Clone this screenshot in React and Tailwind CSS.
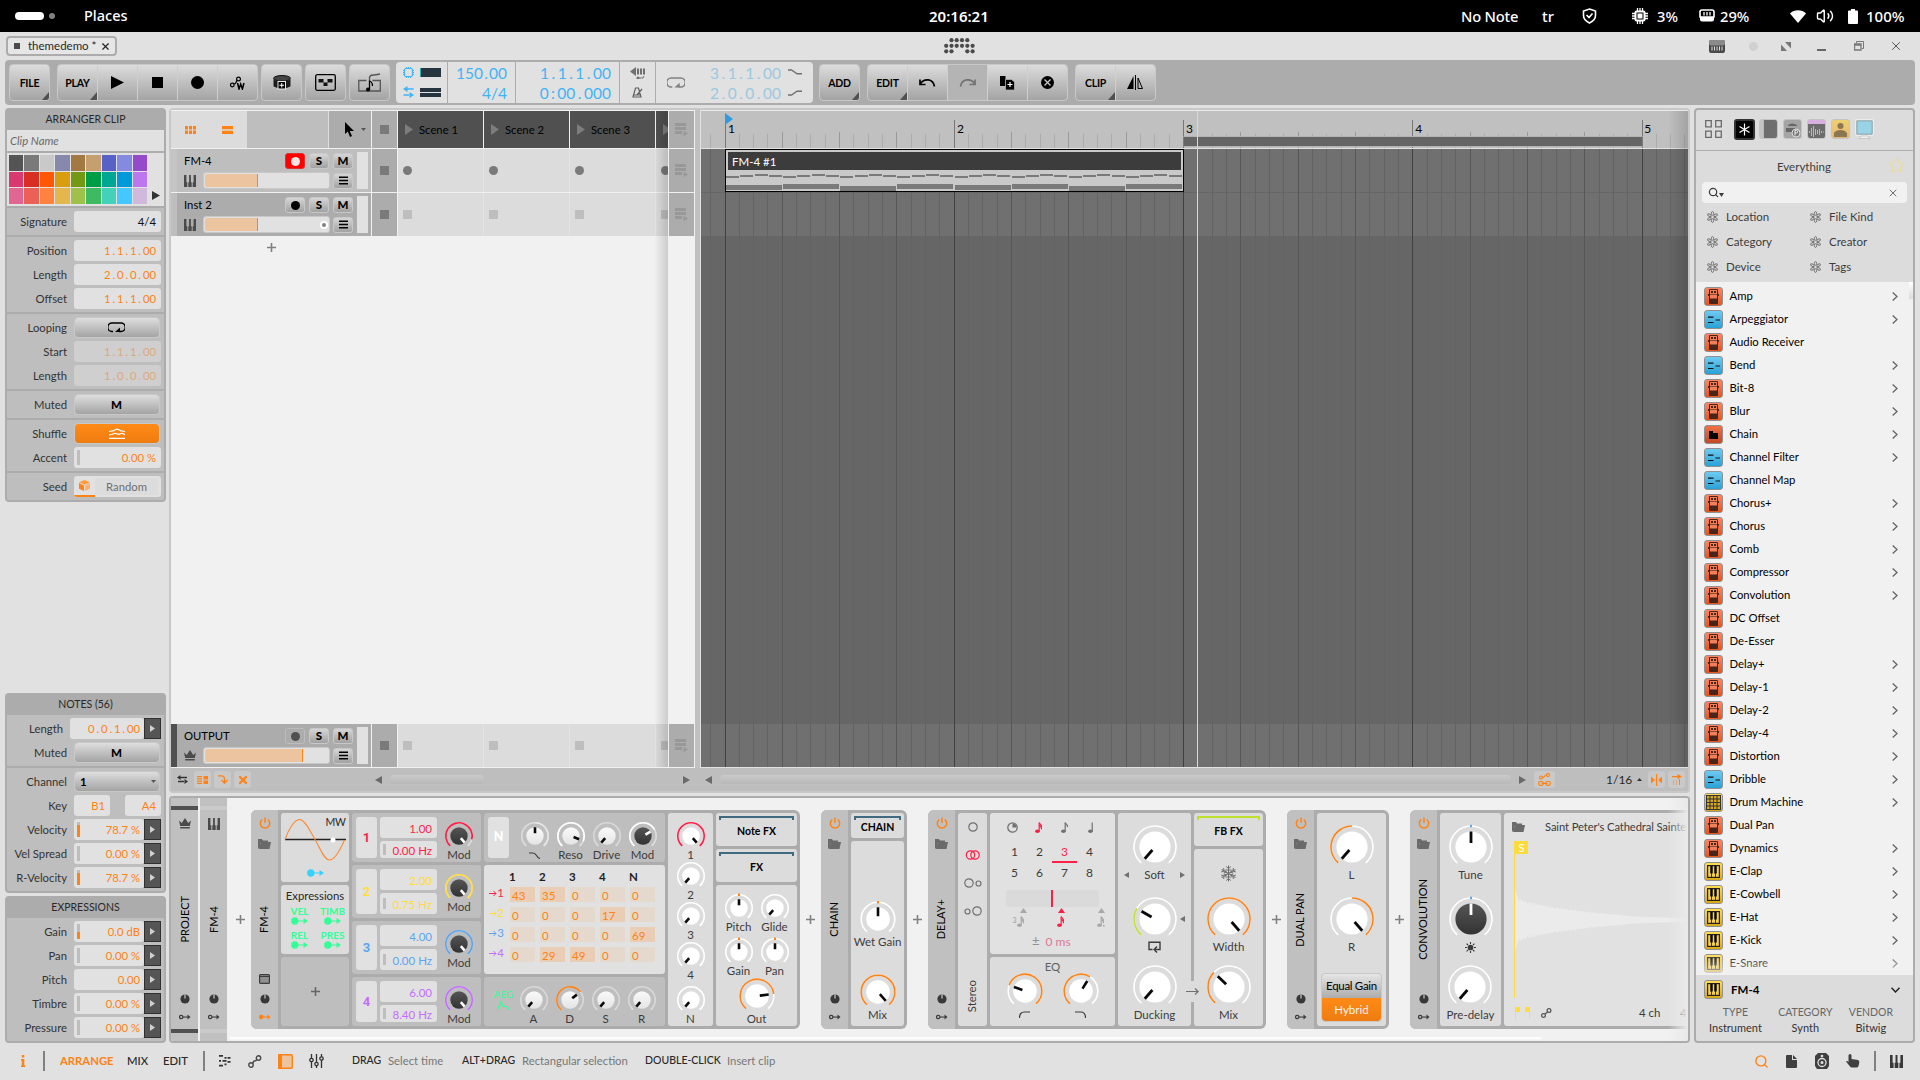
import React from "react";
import { Search, X, Volume2, Star } from "lucide-react";

const polar = (c, r, deg) => {
  const a = (deg * Math.PI) / 180;
  return [c + r * Math.sin(a), c - r * Math.cos(a)];
};
const arcPath = (c, r, from, to) => {
  const [x1, y1] = polar(c, r, from);
  const [x2, y2] = polar(c, r, to);
  return `M${x1} ${y1}A${r} ${r} 0 ${to - from > 180 ? 1 : 0} 1 ${x2} ${y2}`;
};

const KNOBS = {
  s: { box: 30, r: 13.2, disc: 8.7, from: 2.8, w: 2.6 },
  m: { box: 38, r: 16.8, disc: 11.8, from: 2.8, w: 2.6 },
  l: { box: 46, r: 21, disc: 15.6, from: 4, w: 2.8 },
};

function Knob({ size = "s", at = -139, arc, color = "#ff8214", track = "#ffffff", dark, soft, tip }) {
  const k = KNOBS[size];
  const c = k.box / 2;
  const [x1, y1] = polar(c, k.from, at);
  const [x2, y2] = polar(c, k.disc, at);
  return (
    <svg width={k.box} height={k.box} className="block shrink-0">
      <defs>
        <linearGradient id="darkDisc" x1="0" y1="0" x2="0" y2="1">
          <stop offset="0" stopColor="#555" />
          <stop offset="1" stopColor="#333" />
        </linearGradient>
        <linearGradient id="softDisc" x1="0" y1="0" x2="0" y2="1">
          <stop offset="0" stopColor="#fafafa" />
          <stop offset="1" stopColor="#e4e4e4" />
        </linearGradient>
      </defs>
      <path d={arcPath(c, k.r, -139, 139)} fill="none" stroke={track} strokeWidth="1.6" />
      {arc && <path d={arcPath(c, k.r, arc[0], arc[1])} fill="none" stroke={color} strokeWidth="1.6" />}
      {tip && <rect x={c - 1} y={c - k.r - 1.2} width="2" height="2.4" fill={tip} />}
      <circle cx={c} cy={c} r={k.disc} fill={dark ? "url(#darkDisc)" : soft ? "url(#softDisc)" : "#fff"} />
      <line x1={x1} y1={y1} x2={x2} y2={y2} stroke={dark ? "#fff" : "#0a0a0a"} strokeWidth={k.w} />
    </svg>
  );
}

function Unit({ label, className = "", labelClass = "", size = "s", ...rest }) {
  return (
    <div className={"flex flex-col items-center " + className}>
      <Knob size={size} {...rest} />
      <div className={"flex h-3 items-center justify-center whitespace-nowrap text-[11.5px] leading-3 text-[#3c3c3c] " + (size === "l" ? "" : "-mt-0.5 ") + labelClass}>
        {label}
      </div>
    </div>
  );
}

/* ---------- small drawings ---------- */
const Keys = ({ className = "", w = 12, h = 12, color = "#4a4a4a" }) => (
  <svg width={w} height={h} viewBox="0 0 12 12" className={className} preserveAspectRatio="none">
    <path d="M0 0h2.4v7.2h.9V12H0zM4.3 12V7.2h.8V0h1.8v7.2h.8V12zM12 0H9.6v7.2h-.9V12H12z" fill={color} />
  </svg>
);
const Crown = ({ color = "#4a4a4a" }) => (
  <svg width="12" height="11" viewBox="0 0 12 11">
    <path d="M0 2.5 2.8 5 6 0l3.2 5L12 2.5 10.8 8H1.2zM1.2 9h9.6v1.5H1.2z" fill={color} />
  </svg>
);
const PlusMark = ({ color = "#808080" }) => (
  <svg width="9" height="9" className="block"><path d="M4.5 0v9M0 4.5h9" stroke={color} strokeWidth="1.6" /></svg>
);
const Power = () => (
  <svg width="12" height="14" viewBox="0 0 12 14">
    <path d="M3.2 3.6a4.7 4.7 0 1 0 5.6 0M6 1.5v5.5" fill="none" stroke="#ff8214" strokeWidth="1.5" />
  </svg>
);
const Folder = () => (
  <svg width="13" height="10" viewBox="0 0 13 10">
    <path d="M0 0h4l1 1.5h5V3H3L1.5 9.5H0z" fill="#6a6a6a" />
    <path d="M3 3h10l-1.5 7H1z" fill="#6a6a6a" />
  </svg>
);
const MiniKnob = () => (
  <svg width="10" height="10"><circle cx="5" cy="5" r="4.6" fill="#383838" /><path d="M5 .5v4" stroke="#c0c0c0" strokeWidth="1.3" /></svg>
);
const Route = ({ color = "#3c3c3c", fill }) => (
  <svg width="12" height="6" viewBox="0 0 12 6">
    <circle cx="2.2" cy="3" r="1.7" fill={fill ? color : "none"} stroke={color} strokeWidth="1.2" />
    <path d="M4 3h6" stroke={color} strokeWidth="1.2" />
    <path d="M8.5.5 11.5 3l-3 2.5z" fill={color} />
  </svg>
);
const ModRoute = ({ color }) => (
  <svg width="17" height="8" viewBox="0 0 17 8" className="block">
    <circle cx="3.8" cy="4" r="3.7" fill={color} />
    <path d="M4 4h10" stroke={color} strokeWidth="1.2" />
    <path d="M12.5 1 17 4l-4.5 3z" fill={color} />
  </svg>
);
const LoopIcon = ({ color = "#000", w = 17 }) => (
  <svg width={w} height={w * 0.65} viewBox="0 0 17 11">
    <path d="M5 9.5H4A4 4 0 0 1 4 1h9a4 4 0 0 1 0 8.5h-2" fill="none" stroke={color} strokeWidth="1.5" />
    <path d="M12 5.5V10H7z" fill={color} />
  </svg>
);
const Tri = ({ dir = "r", color = "#6a6a6a", w = 7, h = 8 }) => (
  <svg width={w} height={h} viewBox="0 0 7 8" preserveAspectRatio="none" className="block">
    <path d={dir === "r" ? "M0 0 7 4 0 8z" : dir === "l" ? "M7 0 0 4l7 4z" : "M0 8 3.5 0 7 8z"} fill={color} />
  </svg>
);
const Note = ({ color = "#707070", flags = 1, dot }) => (
  <svg width="9" height="11" viewBox="0 0 9 11" className="block">
    <ellipse cx="2.4" cy="9.2" rx="2.3" ry="1.7" fill={color} />
    <path d="M4.2 9.2V.5" stroke={color} strokeWidth="1.2" />
    {flags > 0 && <path d="M4.2.8c.5 1.6 3 1.6 2.2 4.2" fill="none" stroke={color} strokeWidth="1.3" />}
    {flags > 1 && <path d="M4.2 3c.5 1.6 3 1.6 2.2 4.2" fill="none" stroke={color} strokeWidth="1.3" />}
    {dot && <rect x="6" y="9" width="1.6" height="1.6" fill={color} />}
  </svg>
);
const Flake = () => (
  <svg width="17" height="17" viewBox="-8.5 -8.5 17 17" fill="none" stroke="#707070" strokeWidth="1">
    {[0, 60, 120, 180, 240, 300].map((a) => (
      <path key={a} transform={`rotate(${a})`} d="M0 0V-8M-2.300-7 0-5 2.300-7M-2-4.300 0-2.600 2-4.300" />
    ))}
  </svg>
);
const Menu = () => (
  <svg width="9" height="9"><path d="M0 1.2h9M0 4.5h9M0 7.8h9" stroke="#000" strokeWidth="1.6" /></svg>
);
const Chain = ({ color = "#4a4a4a" }) => (
  <svg width="14" height="13" viewBox="0 0 14 13" fill="none" stroke={color} strokeWidth="1.4">
    <circle cx="3" cy="10" r="2.2" /><circle cx="10.5" cy="3" r="2.2" /><path d="M4.5 8.5C6 7 5 6 6.5 6S8 5 9 4.5" />
  </svg>
);

/* Position values put each dot in a digit-wide cell. */
function Pos({ children, dot = "w-[6.4px]" }) {
  return children.split("").map((ch, i) =>
    ch === "." || ch === ":" ? (
      <span key={i} className={"inline-block text-center " + dot}>{ch}</span>
    ) : ch
  );
}

/* ---------- system bar ---------- */
function SystemBar() {
  return (
    <div className="flex h-8 items-center bg-black font-['Noto_Sans',sans-serif] text-[14.7px] font-medium text-white">
      <div className="ml-[15px] h-2 w-[29px] rounded-full bg-white" />
      <div className="ml-[5px] size-[6px] rounded-full bg-[#808080]" />
      <div className="ml-[29px] w-[845px] text-[14.5px]">Places</div>
      <div className="w-[532px] text-[15px] font-semibold">20:16:21</div>
      <div className="w-[81px] tracking-[-0.2px]">No Note</div>
      <div className="w-[40px]">tr</div>
      <div className="w-[50px]">
        <svg width="15" height="16" viewBox="0 0 15 16" fill="none" stroke="#fff" strokeWidth="1.6">
          <path d="M7.5 1 13.5 3v4.500c0 4-3 6-6 7.500-3-1.500-6-3.500-6-7.500V3zM4.500 7l2.500 2.500 3.500-4" />
        </svg>
      </div>
      <div className="flex w-[67px] items-center gap-[9px]">
        <svg width="16" height="16" viewBox="0 0 16 16">
          <path d="M5.5 0v16M8 0v16M10.5 0v16M0 5.5h16M0 8h16M0 10.5h16" stroke="#fff" strokeWidth="1.3" />
          <rect x="2.5" y="2.5" width="11" height="11" rx="2" fill="#fff" />
          <rect x="5" y="5" width="6" height="6" fill="#fff" stroke="#000" />
        </svg>
        <span>3%</span>
      </div>
      <div className="flex w-[91px] items-center gap-[5px]">
        <svg width="16" height="13" viewBox="0 0 16 13">
          <path d="M1 3a2 2 0 0 1 2-2h10a2 2 0 0 1 2 2v5H1z" fill="none" stroke="#fff" strokeWidth="1.6" />
          <path d="M5 3v3.5M8 3v3.5M11 3v3.5" stroke="#fff" strokeWidth="1.3" />
          <path d="M1 8h14v2.500a2 2 0 0 1-2 2H3a2 2 0 0 1-2-2z" fill="#fff" />
        </svg>
        <span>29%</span>
      </div>
      <svg width="16" height="13" viewBox="0 0 16 13"><path d="M0 3.500C4-.8 12-.8 16 3.500L8 13z" fill="#fff" /></svg>
      <Volume2 size={18} strokeWidth={1.9} className="ml-[10px]" />
      <svg width="11" height="15" viewBox="0 0 11 15" className="ml-[14px]"><path d="M3 0h4v1.500h2a1 1 0 0 1 1 1V14a1 1 0 0 1-1 1H1a1 1 0 0 1-1-1V2.500a1 1 0 0 1 1-1h2z" fill="#fff" /></svg>
      <span className="ml-[7px] text-[15px]">100%</span>
    </div>
  );
}

function TitleRow() {
  return (
    <div className="flex h-7 items-center">
      <div className="ml-1.5 flex h-[20px] w-[111px] items-center rounded border-2 border-[#acacac] bg-[#e6e6e6]">
        <div className="ml-1.5 size-[6px] bg-[#4a4a4a]" />
        <span className="ml-2 w-[72px] text-[11.5px] whitespace-nowrap text-[#282828]">themedemo *</span>
        <X size={11} strokeWidth={2.5} color="#222" />
      </div>
      <svg width="31" height="16" viewBox="0 0 31 16" className="ml-[827px]" fill="#4a4a4a">
        {[7.5, 12.7, 18, 23.3].map((x) => <circle key={x} cx={x} cy="2.2" r="2.1" />)}
        {[2.2, 7.5, 12.7, 18, 23.3, 28.6].map((x) => <circle key={x} cx={x} cy="7.8" r="2.1" />)}
        {[2.2, 7.5, 23.3, 28.6].map((x) => <circle key={x} cx={x} cy="13.3" r="2.1" />)}
      </svg>
      <svg width="16" height="13" viewBox="0 0 16 13" className="ml-[734px]">
        <rect width="16" height="13" rx="2" fill="#484848" />
        <rect width="16" height="5.5" rx="2" fill="#8a8a8a" />
        <path d="M3 6.500V10.500M5.500 6.500V10.500M8 6.500V10.500M10.500 6.500V10.500M13 6.500V10.500" stroke="#e1e1e1" />
      </svg>
      <div className="ml-6 size-[9px] rounded-full bg-[#d0d0d0]" />
      <svg width="10" height="9" viewBox="0 0 10 9" className="ml-[23px]"><path d="M4 0H10v6.500zM0 2.500v6.500h6z" fill="#777" /></svg>
      <div className="mt-2 ml-[26px] h-[2px] w-[9px] bg-[#666]" />
      <svg width="10" height="10" className="ml-7" fill="none" stroke="#777"><path d="M2.500 2V.500h7v7H8" /><path d="M.5 3h6.500v6H.500zM.500 4h6" strokeWidth="1.3" /></svg>
      <X size={14} strokeWidth={1.7} color="#555" className="ml-[25px]" />
    </div>
  );
}

/* ---------- toolbar ---------- */
const btn = "border border-[#c8c8c8] bg-linear-to-b from-[#dcdcdc] to-[#a4a4a4]";
const Group = ({ children, className }) => (
  <div className={`flex h-[37px] divide-x divide-[#cfcfcf] overflow-hidden rounded ${btn} ${className}`}>{children}</div>
);
const Tool = ({ children, menu, className = "" }) => (
  <div className={"relative flex flex-1 items-center justify-center text-[10.5px] font-bold tracking-[-0.2px] text-black " + (menu ? "pt-[2px] " : "") + className}>
    {children}
    {menu && <svg width="7" height="8" className="absolute right-0 bottom-0"><path d="M7 0v8H0z" fill="#505050" /></svg>}
  </div>
);

function Toolbar() {
  return (
    <div className="mx-[5px] flex h-[45px] items-center rounded bg-[#acacac] pl-1">
      <Group className="w-[41px]"><Tool menu>FILE</Tool></Group>
      <Group className="ml-[7px] w-[201px]">
        <Tool menu>PLAY</Tool>
        <Tool><Tri color="#000" w={13} h={13} /></Tool>
        <Tool><div className="size-[11px] bg-black" /></Tool>
        <Tool><div className="size-[13px] rounded-full bg-black" /></Tool>
        <Tool>
          <svg width="16" height="14" viewBox="0 0 16 14" fill="none" stroke="#000" strokeWidth="1.2">
            <circle cx="2.3" cy="9" r="1.8" /><circle cx="8.5" cy="3" r="1.9" /><path d="M4 8c3 0 1.500-3 3.500-4" />
            <path d="m7.500 7 1.500 6 1.700-5 1.700 5L14 7" strokeWidth="1.5" />
          </svg>
        </Tool>
      </Group>
      <Group className="ml-[3px] w-[41px]">
        <Tool>
          <svg width="18" height="15" viewBox="0 0 18 15">
            <path d="M.5 4C2 7 16 7 17.500 4V11c-2 3-15 3-17 0z" fill="#1c1c1c" />
            <ellipse cx="9" cy="3.3" rx="8.4" ry="2.8" fill="#444" stroke="#111" />
            <rect x="5" y="6.500" width="7.500" height="7.500" fill="#000" stroke="#e8e8e8" /><path d="M8.750 8v4.500M6.500 10.250H11" stroke="#fff" />
          </svg>
        </Tool>
      </Group>
      <Group className="ml-[3px] w-[41px]">
        <Tool>
          <svg width="21" height="17" viewBox="0 0 21 17"><rect x=".7" y=".7" width="19.6" height="15.6" rx="1.5" fill="none" stroke="#000" strokeWidth="1.3" /><path d="M3.500 5h5v3.500h-5zM12.500 5h5v3.500h-5zM8.500 8.500h4V12h-4z" fill="#111" /></svg>
        </Tool>
      </Group>
      <Group className="ml-[3px] w-[41px]">
        <Tool>
          <svg width="23" height="19" viewBox="0 0 23 19" fill="none" stroke="#555" strokeWidth="1.3"><path d="M8.500 7.500H.8v10.500h21.500V7.500H14.500M11.500 7.500V4.500Q12 2 15 2T22 1" /><path d="M11.500 17V8q3 1 3 5" stroke="#000" /><circle cx="10" cy="16.500" r="2" fill="#000" stroke="none" /></svg>
        </Tool>
      </Group>
      <div className="ml-1.5 flex h-[41px] w-[417px] divide-x divide-[#acacac] rounded bg-[#e1e1e1] text-[15.5px] leading-5 text-[#3fb4f5]">
        <div className="flex w-[52px] flex-col justify-between py-[5px] pl-[7px]">
          <div className="flex items-center gap-1.5">
            <svg width="11" height="11"><rect x="1.5" y="1.5" width="8" height="8" rx="1.5" fill="none" stroke="#3fb4f5" strokeWidth="1.2" /><path d="M3.500 0v1M5.500 0v1M7.500 0v1M3.500 10v1M5.500 10v1M7.500 10v1M0 3.500h1M0 5.500h1M0 7.500h1M10 3.500h1M10 5.500h1M10 7.500h1" stroke="#3fb4f5" /></svg>
            <div className="h-[9px] w-[21px] border-l border-[#2aa] bg-[#25343f]" />
          </div>
          <div className="flex items-center gap-1.5">
            <svg width="11" height="12" fill="#3fb4f5"><path d="M4.500 0v6L0 3zM4 2.200h6.500v1.600H4zM6.500 6v6L11 9zM.5 8.200H7v1.600H.5z" /></svg>
            <div className="flex flex-col gap-px"><div className="h-1 w-[21px] bg-[#25343f]" /><div className="h-1 w-[21px] bg-[#25343f]" /></div>
          </div>
        </div>
        <div className="flex w-[68px] flex-col pt-px pr-2 text-right"><span><Pos dot="w-[6px]">150.00</Pos></span><span>4/4</span></div>
        <div className="flex w-[104px] flex-col pt-px pr-2 text-right"><span><Pos dot="w-[8.7px]">1.1.1.00</Pos></span><span><Pos dot="w-[8.7px]">0:00.000</Pos></span></div>
        <div className="flex w-[36px] flex-col items-center justify-between py-[5px]">
          <svg width="15" height="12" fill="#707070"><path d="M6 0v9L0 4.500zM7 1.500h2v6H7zM10 1.500h2v6h-2zM13 1.500h2v6h-2z" /><circle cx="8" cy="11" r="1.5" /><path d="M9 11h4l1-2" stroke="#707070" fill="none" /></svg>
          <svg width="11" height="11" fill="none" stroke="#606060" strokeWidth="1.2"><path d="M3.500 1h3l2.500 9H1zM2 8h7M5 8 10 2" /></svg>
        </div>
        <div className="flex flex-1">
          <div className="flex w-[40px] items-center justify-center"><LoopIcon color="#808080" w={18} /></div>
          <div className="flex w-[85px] flex-col pt-px text-right text-[#9cc8e0]"><span><Pos dot="w-[8.7px]">3.1.1.00</Pos></span><span><Pos dot="w-[8.7px]">2.0.0.00</Pos></span></div>
          <div className="flex flex-1 flex-col items-center justify-between py-[7px] pr-1">
            <svg width="14" height="6" fill="none" stroke="#707070" strokeWidth="1.4"><path d="M0 1h3.500L9 4.800h5" /></svg>
            <svg width="14" height="6" fill="none" stroke="#707070" strokeWidth="1.4"><path d="M0 5h3.500L9 1.200h5" /></svg>
          </div>
        </div>
      </div>
      <Group className="ml-1.5 w-[41px]"><Tool menu>ADD</Tool></Group>
      <Group className="ml-[7px] w-[201px]">
        <Tool menu>EDIT</Tool>
        <Tool><svg width="17" height="10" viewBox="0 0 17 10" fill="none" stroke="#000" strokeWidth="1.7"><path d="M1.500 5.500C5 .5 14 0 15.500 8.500" /><path d="M1 1.500V6.500h5.500" /></svg></Tool>
        <Tool className="bg-[#b4b4b4]"><svg width="17" height="10" viewBox="0 0 17 10" fill="none" stroke="#707070" strokeWidth="1.7"><path d="M15.500 5.500C12 .5 3 0 1.500 8.500" /><path d="M16 1.500V6.500h-5.500" /></svg></Tool>
        <Tool><svg width="15" height="14" viewBox="0 0 15 14"><path d="M0 0h5.500v10H0z" /><path d="M5.500 3.500h6L14.500 6v8h-9z" stroke="#bbb" strokeWidth=".7" /><path d="M10 6v5M7.500 8.500h5" stroke="#fff" strokeWidth="1.2" /></svg></Tool>
        <Tool><svg width="13" height="13"><circle cx="6.5" cy="6.5" r="6.5" /><path d="m3.500 3.500 6 6M9.500 3.500l-6 6" stroke="#c8c8c8" strokeWidth="1.3" /></svg></Tool>
      </Group>
      <Group className="ml-[7px] w-[81px]">
        <Tool menu>CLIP</Tool>
        <Tool><svg width="17" height="15"><path d="M6.500 1v13H0zM8 0h1v15H8z" /><path d="M11 3v10.500h4.500z" fill="none" stroke="#000" /></svg></Tool>
      </Group>
    </div>
  );
}

/* ---------- inspector ---------- */
const Panel = ({ title, children }) => (
  <div className="rounded border-2 border-[#acacac] bg-[#bebebe]">
    <div className="flex h-5 items-center justify-center bg-[#acacac] text-[10.5px] text-[#282828]">{title}</div>
    <div className="divide-y-2 divide-[#acacac]">{children}</div>
  </div>
);
const Section = ({ children }) => <div className="flex flex-col gap-[3px] py-[3px]">{children}</div>;
const Row = ({ label, children, tight }) => (
  <div className="flex h-[21px] items-center">
    <div className={"shrink-0 pt-px text-right text-[11.3px] whitespace-nowrap text-[#333] " + (tight ? "w-14" : "w-[60px]")}>{label}</div>
    <div className="ml-[7px] flex flex-1 pr-[3px]">{children}</div>
  </div>
);
const Field = ({ children, className = "text-[#ff8214]", level, arrow, dim }) => (
  <>
    <div className={"flex h-[21px] flex-1 items-center rounded-[3px] text-[11.3px] " + (dim ? "bg-[#cfcfcf] " : "bg-[#e1e1e1] ") + className}>
      {level !== undefined && (
        <div className="ml-[3px] flex h-[15px] w-[3px] items-end bg-[#bebebe]">
          <div className="w-full bg-[#ff8214]" style={{ height: level + "%" }} />
        </div>
      )}
      <div className={"flex-1 pt-[2px] text-right whitespace-nowrap " + (arrow ? "pr-1" : "pr-[5px]")}>{children}</div>
    </div>
    {arrow && <div className="flex h-[21px] w-[17px] items-center justify-center border border-[#303030] bg-[#555]"><Tri color="#d0d0d0" w={5} h={7} /></div>}
  </>
);
const Push = ({ children, on }) => (
  <div className={"mr-0.5 ml-px flex h-[19px] flex-1 items-center justify-center rounded-[3px] pr-px text-[11.5px] font-black text-black " + (on ? "bg-linear-to-b from-[#ff8a16] to-[#ee7c10] outline outline-[#c8c8c8]" : "bg-linear-to-b from-[#dedede] to-[#a4a4a4] outline outline-[#c8c8c8]")}>
    {children}
  </div>
);

const SWATCHES = [
  "bg-[#545454]", "bg-[#7a7a7a]", "bg-[#c9c9c9]", "bg-[#8689ac]", "bg-[#a37943]", "bg-[#c69f70]", "bg-[#5761c6]", "bg-[#848ae0]", "bg-[#9549cb]",
  "bg-[#d93871]", "bg-[#d92e24]", "bg-[#ff5706]", "bg-[#d99d10]", "bg-[#739914]", "bg-[#009d47]", "bg-[#00a694]", "bg-[#0099d9]", "bg-[#bc76f0]",
  "bg-[#e16691]", "bg-[#ec6157]", "bg-[#ff833e]", "bg-[#e4b74e]", "bg-[#a0c04c]", "bg-[#3ebb62]", "bg-[#43d2b9]", "bg-[#44c8ff]", "bg-[#d1b9de]",
];

function Inspector() {
  return (
    <div className="flex w-[161px] shrink-0 flex-col">
      <Panel title="ARRANGER CLIP">
        <div className="flex h-[23px] items-center bg-[#e1e1e1] pt-[2px] pl-[3px] text-[11.3px] text-[#6a6a6a] italic">Clip Name</div>
        <div className="flex h-[55px] bg-[#e1e1e1] pt-[2px] pl-[2px]">
          <div className="grid h-[49px] w-[138px] grid-cols-9 gap-px">
            {SWATCHES.map((c) => <div key={c} className={c} />)}
          </div>
          <div className="mt-9 ml-[5px]"><Tri color="#333" w={8} h={9} /></div>
        </div>
        <Section><Row label="Signature"><Field className="text-[#111]">4/4</Field></Row></Section>
        <Section>
          <Row label="Position"><Field><Pos>1.1.1.00</Pos></Field></Row>
          <Row label="Length"><Field><Pos>2.0.0.00</Pos></Field></Row>
          <Row label="Offset"><Field><Pos>1.1.1.00</Pos></Field></Row>
        </Section>
        <Section>
          <Row label="Looping"><Push><LoopIcon /></Push></Row>
          <Row label="Start"><Field dim className="text-[#dfa878]"><Pos>1.1.1.00</Pos></Field></Row>
          <Row label="Length"><Field dim className="text-[#dfa878]"><Pos>1.0.0.00</Pos></Field></Row>
        </Section>
        <Section><Row label="Muted"><Push>M</Push></Row></Section>
        <Section>
          <Row label="Shuffle">
            <Push on><svg width="16" height="11" fill="none" stroke="#fff" strokeWidth="1.2"><path d="M0 10.300h16M0 6.800q3 0 4.500-1t3.500 0 3.500 0 4.500 1M0 3.500q4 0 8-2.500 4 2.500 8 2.500" /></svg></Push>
          </Row>
          <Row label="Accent"><Field level={0}>0.00 %</Field></Row>
        </Section>
        <Section>
          <Row label="Seed">
            <div className="flex h-[21px] flex-1 overflow-hidden rounded-[3px] bg-[#e1e1e1]">
              <div className="flex w-[21px] items-center justify-center border-b-2 border-[#ff8214]">
                <svg width="11" height="11"><path d="M5.500 0 11 2.300 5.500 4.800 0 2.300z" fill="#ff9a40" /><path d="M0 3 5 5.400V11L0 8.700z" fill="#ff8214" /><path d="M11 3 6 5.400V11l5-2.300z" fill="#ffb070" /></svg>
              </div>
              <div className="my-[2px] mr-[3px] flex flex-1 items-center justify-center bg-[#dcdcdc] pt-px text-[11.3px] text-[#707070]">Random</div>
            </div>
          </Row>
        </Section>
      </Panel>
      <div className="flex-1" />
      <Panel title="NOTES (56)">
        <Section>
          <Row label="Length" tight><Field arrow><Pos>0.0.1.00</Pos></Field></Row>
          <Row label="Muted"><Push>M</Push></Row>
        </Section>
        <Section>
          <Row label="Channel">
            <Push><span className="flex-1 pt-px pl-[5px] font-bold">1</span><svg width="5" height="3" className="mr-[2px]"><path d="M0 0h5L2.500 3z" fill="#555" /></svg></Push>
          </Row>
          <Row label="Key"><Field>B1</Field><div className="w-[15px]" /><Field>A4</Field></Row>
          <Row label="Velocity"><Field level={79} arrow>78.7 %</Field></Row>
          <Row label="Vel Spread"><Field level={0} arrow>0.00 %</Field></Row>
          <Row label="R-Velocity"><Field level={79} arrow>78.7 %</Field></Row>
        </Section>
      </Panel>
      <div className="h-[3px]" />
      <Panel title="EXPRESSIONS">
        <Section>
          <Row label="Gain"><Field level={50} arrow>0.0 dB</Field></Row>
          <Row label="Pan"><Field level={0} arrow>0.00 %</Field></Row>
          <Row label="Pitch"><Field arrow>0.00</Field></Row>
          <Row label="Timbre"><Field level={0} arrow>0.00 %</Field></Row>
          <Row label="Pressure"><Field level={0} arrow>0.00 %</Field></Row>
        </Section>
      </Panel>
    </div>
  );
}

/* ---------- arranger ---------- */
const Mini = ({ children, className = "bg-linear-to-b from-[#d6d6d6] to-[#a2a2a2] border-[#c8c8c8]" }) => (
  <div className={"flex h-4 w-5 shrink-0 items-center justify-center rounded-[3px] border text-[11.5px] leading-4 font-black text-black " + className}>{children}</div>
);

function Track({ name, icon, body = "bg-[#acacac]", strip = "bg-[#bebebe]", rec, fill, pan }) {
  return (
    <div className={"flex h-[43px] w-[200px] " + body}>
      <div className={"w-[6px] " + strip} />
      <div className="flex w-[177px] flex-col pt-1">
        <div className="flex h-4 items-center gap-1 pr-px pl-[7px]">
          <span className="flex-1 text-[11.3px] text-black">{name}</span>
          {rec}
          <Mini>S</Mini>
          <Mini>M</Mini>
        </div>
        <div className="mt-[3px] flex h-[17px] items-center">
          <div className="flex w-[26px] justify-center">{icon}</div>
          <div className="flex h-[17px] w-[127px] items-center rounded-[3px] border border-[#c8c8c8] bg-[#e1e1e1] p-px">
            <div className={"h-[13px] rounded-l-[2px] border-r border-[#ff8214] bg-[#edc4a0] " + fill} />
            {pan && <div className="ml-auto flex size-2 items-center justify-center rounded-full bg-white"><div className="size-1 rounded-full bg-[#808080]" /></div>}
          </div>
          <div className="ml-[3px]"><Mini><Menu /></Mini></div>
        </div>
      </div>
      <div className="mt-[3px] ml-[3px] h-[37px] w-[11px] bg-[#e1e1e1]" />
    </div>
  );
}

const Square = ({ className }) => <div className={"size-[9px] " + className} />;
const QueueIcon = () => (
  <svg width="13" height="13" fill="#989898"><path d="M0 0h11v3H0zM0 4h11v3H0zM0 8h7v3H0zM8.500 8 13 10.500 8.500 13z" /></svg>
);
const LauncherRow = ({ mark }) => (
  <div className="flex flex-1 gap-px">
    <div className="flex w-[25px] items-center justify-center bg-[#acacac]"><Square className="bg-[#7a7a7a]" /></div>
    <div className="flex w-[270px] divide-x divide-[#e4e4e4] overflow-hidden bg-[#dcdcdc]">
      {[0, 1, 2, 3].map((i) => (
        <div key={i} className={"flex shrink-0 items-center pl-[5px] " + (i < 3 ? "w-[86px]" : "w-[30px]")}>
          <div className={"size-[9px] shrink-0 " + (mark === "dot" ? "rounded-full bg-[#7a7a7a]" : "bg-[#bebebe]")} />
        </div>
      ))}
    </div>
    <div className="flex w-[25px] items-center justify-center bg-[#acacac]"><QueueIcon /></div>
  </div>
);

function Launcher() {
  return (
    <div className="relative flex w-[524px] shrink-0 flex-col bg-[#f1f1f1] pt-px">
      <div className="flex h-[37px] gap-px">
        <div className="flex w-[200px]">
          <div className="flex w-[76px] items-center bg-[#dcdcdc] pl-[14px]">
            <svg width="11" height="8" fill="#ff8214"><path d="M0 0h3v3.500H0zM4 0h3v3.500H4zM8 0h3v3.500H8zM0 4.500h3V8H0zM4 4.500h3V8H4zM8 4.500h3V8H8z" /></svg>
            <svg width="11" height="8" fill="#ff8214" className="ml-[26px]"><path d="M0 0h11v3.200H0zM0 4.800h11V8H0z" /></svg>
          </div>
          <div className="w-[82px] border-r border-[#ddd] bg-[#bebebe]" />
          <div className="flex flex-1 items-center bg-[#acacac] pl-4">
            <svg width="10" height="15"><path d="M0 0v12l2.800-2.500L5 15l2-1-2.300-5H9z" /></svg>
            <svg width="5" height="3" className="ml-[6px]"><path d="M0 0h5L2.500 3z" fill="#555" /></svg>
          </div>
        </div>
        <div className="flex w-[25px] items-center justify-center bg-[#acacac]"><Square className="bg-[#7a7a7a]" /></div>
        <div className="flex w-[270px] gap-px overflow-hidden">
          {["Scene 1", "Scene 2", "Scene 3", ""].map((s, i) => (
            <div key={i} className={"flex shrink-0 items-center gap-[6px] bg-[#505050] pl-[7px] text-[11.3px] text-black " + (i < 3 ? "w-[85px]" : "w-[30px]")}>
              <div className="shrink-0"><Tri color="#7d7d7d" w={8} h={11} /></div><span className="pt-px">{s}</span>
            </div>
          ))}
        </div>
        <div className="flex w-[25px] items-center justify-center bg-[#acacac]"><QueueIcon /></div>
      </div>
      <div className="mt-px flex gap-px">
        <Track name="FM-4" body="bg-[#bebebe]" strip="bg-[#c4c4c4]" icon={<Keys />} fill="w-[53px]"
          rec={<Mini className="border-[#e03030] bg-[#ff0000]"><div className="size-[9px] rounded-full bg-[#f1e4e4]" /></Mini>} />
        <LauncherRow mark="dot" />
      </div>
      <div className="mt-px flex gap-px">
        <Track name="Inst 2" icon={<Keys />} fill="w-[53px]" pan rec={<Mini><div className="size-[9px] rounded-full bg-black" /></Mini>} />
        <LauncherRow mark="square" />
      </div>
      <div className="flex flex-1 justify-start pt-[7px] pl-[96px]"><PlusMark /></div>
      <div className="mb-px flex gap-px">
        <Track name="OUTPUT" icon={<Crown />} strip="bg-[#505050]" fill="w-[98px]"
          rec={<Mini className="border-[#bcbcbc] bg-[#acacac]"><div className="size-[9px] rounded-full bg-[#505050]" /></Mini>} />
        <LauncherRow mark="square" />
      </div>
      <div className="pointer-events-none absolute top-px right-[27px] bottom-px w-3.5 bg-linear-to-r from-transparent to-black/15" />
    </div>
  );
}

const BAR = 229.25;
const BAR1 = 24.5;
const SIXTEENTHS = Array.from({ length: 69 }, (_, i) => i - 1).map((n) => ({ n, x: Math.round(BAR1 + (n * BAR) / 16) - 0.5 }));

function Timeline() {
  return (
    <div className="relative flex w-[987px] shrink-0 flex-col pt-px">
      <div className="relative h-[37px] bg-[#c0c0c0]">
        <svg width="987" height="37" className="block">
          {SIXTEENTHS.map(({ n, x }) => (
            <path key={n} d={`M${x} ${n % 16 === 0 ? 9 : n % 4 === 0 ? 21 : 23}V37`} stroke={n % 16 === 0 ? "#777" : n % 4 === 0 ? "#999" : "#adadad"} />
          ))}
          <path d="M24 2v12l8-6z" fill="#2f9be0" />
          <rect x="482.5" y="25" width="459" height="11" fill="#b4b4b4" />
          <rect x="482.5" y="26" width="459" height="9" fill="#656565" />
        </svg>
        {[1, 2, 3, 4, 5].map((b) => (
          <span key={b} className="absolute top-[10px] text-[12px] leading-4 text-black" style={{ left: 27 + (b - 1) * (BAR - 0.2) }}>{b}</span>
        ))}
      </div>
      <div className="h-px bg-[#e1e1e1]" />
      <div className="relative flex flex-1 flex-col bg-[#666]">
        <div className="h-[43px] bg-[#707070]" />
        <div className="mt-px h-[43px] bg-[#707070]" />
        <div className="flex-1" />
        <div className="h-[43px] bg-[#707070]" />
        <svg width="987" height="618" className="absolute inset-0">
          {SIXTEENTHS.map(({ n, x }) => (
            <path key={n} d={`M${x} 0V618`} stroke={n % 16 === 0 ? "#404040" : n % 4 === 0 ? "#575757" : "#636363"} />
          ))}
        </svg>
        <div className="absolute top-0 left-6 h-[43px] w-[459px] border border-black bg-[#c9c9c9]">
          <div className="mx-[2px] mt-[2px] flex h-[18px] items-center bg-[#3c3c3c] pt-px pl-1 text-[11.5px] text-white">FM-4 #1</div>
          <svg width="457" height="22" className="absolute bottom-0 left-0" fill="#7a7a7a">
            {Array.from({ length: 32 }, (_, i) => (
              <rect key={i} x={Math.round((i * 457) / 32)} y={[7, 6, 5, 6][i % 4]} width="13" height="2" />
            ))}
            {Array.from({ length: 8 }, (_, i) => (
              <rect key={i} x={Math.round((i * 457) / 8)} y={[16, 15, 17, 15][i % 4]} width="56" height="5" />
            ))}
          </svg>
        </div>
      </div>
      <div className="h-px bg-[#e1e1e1]" />
      <div className="absolute top-px bottom-px left-[496px] w-px bg-[#d8d8d8]" />
      <div className="absolute top-px right-0 bottom-px w-5 bg-linear-to-r from-transparent to-black/15" />
    </div>
  );
}

const Chip = ({ children, className = "w-[17px]" }) => (
  <div className={"flex h-[17px] items-center justify-center rounded-[3px] bg-[#c9c9c9] " + className}>{children}</div>
);

function Arranger() {
  return (
    <div className="flex h-[685px] flex-col rounded bg-[#c8c8c8] p-[2px]">
      <div className="flex h-[658px] bg-[#e9e9e9]">
        <Launcher />
        <div className="w-[6px] shrink-0 border-r border-[#e1e1e1] bg-[#c0c0c0]" />
        <Timeline />
      </div>
      <div className="flex h-[23px] items-center bg-[#bebebe]">
        <svg width="11" height="9" className="ml-1.5" fill="#333"><path d="M3.500 0v5L0 2.500zM3 1.800h7v1.500H3zM7.500 4v5L11 6.500zM1 5.800h7v1.500H1z" /></svg>
        <Chip className="ml-[6px] w-[17px]"><svg width="11" height="8" fill="#ff8214"><path d="M0 0h5v1.300H0zM0 2.300h5v1.300H0zM0 4.500h5v1.300H0zM0 6.700h5V8H0zM6.500 0H11v3.500H6.500zM6.500 4.500H11V8H6.500z" /></svg></Chip>
        <Chip className="ml-[3px] w-[17px]"><svg width="10" height="9" fill="none" stroke="#ff8214" strokeWidth="1.3"><path d="M0 .8h3.500Q6.500.8 6.500 4v4M3.500 5l3 3.200 3-3.200" /></svg></Chip>
        <Chip className="ml-[3px] w-[17px]"><X size={12} strokeWidth={4.5} color="#ff8214" /></Chip>
        <div className="ml-[124px]"><Tri dir="l" /></div>
        <div className="ml-2 h-[9px] w-[94px] rounded bg-linear-to-b from-[#cacaca] to-[#b8b8b8]" />
        <div className="ml-[199px]"><Tri /></div>
        <div className="ml-[15px]"><Tri dir="l" /></div>
        <div className="ml-2 h-[9px] w-[791px] rounded bg-linear-to-b from-[#cacaca] to-[#b8b8b8]" />
        <div className="ml-2"><Tri /></div>
        <Chip className="ml-2 w-[21px]"><svg width="13" height="13" fill="none" stroke="#ff8214" strokeWidth="1.2"><circle cx="3" cy="4.5" r="1.5" /><circle cx="10" cy="2" r="1.5" /><path d="M4.500 4.500C7 4.500 6 2 8.500 2" /><rect x=".7" y="8.500" width="4.500" height="3.800" rx="1.5" /><rect x="7.800" y="8.500" width="4.500" height="3.800" rx="1.5" /><path d="M3.500 10.400h6" /></svg></Chip>
        <span className="ml-[51px] w-[31px] text-[12px] text-[#282828]">1/16</span>
        <Tri dir="u" color="#333" w={5} h={3} />
        <Chip className="ml-[6px] w-[17px]"><svg width="11" height="12" fill="#ff8214"><path d="M5 0h1.200v12H5zM0 2.500v7L4 6zM11 2.500v7L7.200 6z" /></svg></Chip>
        <Chip className="ml-[3px] w-[17px]"><svg width="10" height="11" fill="#ff8214"><path d="M0 2h6v1.200H0zM5.500 0 10 2.600 5.500 5.200zM7 5h1v6H7z" /><path d="M1 6h1v5H1zM4 6h1v5H4z" opacity=".5" /></svg></Chip>
      </div>
    </div>
  );
}

/* ---------- devices ---------- */
const Vertical = ({ children, className = "text-[11px]" }) => (
  <span className={"rotate-180 whitespace-nowrap [writing-mode:vertical-rl] " + className}>{children}</span>
);
function Strip({ title, head, windowed, active, className = "" }) {
  return (
    <div className={"flex w-[27px] shrink-0 flex-col items-center bg-[#c0c0c0] " + className}>
      <div className="flex h-[42px] flex-col items-center pt-1.5">
        {head || (<><Power /><div className="mt-[9px]"><Folder /></div></>)}
      </div>
      <div className={"relative flex w-full flex-1 items-center justify-center text-black " + (head ? "pl-[2px]" : "")}>
        <Vertical>{title}</Vertical>
        {windowed && <svg width="11" height="10" className="absolute bottom-[3px] left-2"><rect x=".6" y=".6" width="9.8" height="8.8" rx="1" fill="#909090" stroke="#3c3c3c" strokeWidth="1.2" /><path d="M1 2.500h9" stroke="#3c3c3c" /></svg>}
      </div>
      <div className="flex h-[42px] flex-col items-center pt-[7px]">
        <MiniKnob />
        <div className="mt-[10px] flex h-1.5 items-center">{active ? <Route color="#ff8214" fill /> : <Route />}</div>
      </div>
    </div>
  );
}
const Device = ({ children, className = "", ...strip }) => (
  <div className={"mt-3 flex h-[219px] shrink-0 overflow-hidden rounded-[6px] bg-[#acacac] " + className}>
    <Strip {...strip} />
    <div className="flex min-w-0 flex-1 gap-[3px] p-[3px]">{children}</div>
  </div>
);
const Cell = ({ children, className = "bg-[#dcdcdc]" }) => <div className={"shrink-0 rounded-[3px] " + className}>{children}</div>;
const AddSlot = ({ className = "w-[21px]" }) => <div className={"flex shrink-0 items-center justify-center " + className}><PlusMark /></div>;
const Bracket = ({ children, color = "border-[#3f6a80]", className }) => (
  <Cell className={"flex flex-col bg-[#dcdcdc] px-[3px] pt-[3px] text-[10.5px] font-bold text-black " + className}>
    <div className={"h-1 shrink-0 border-x-2 border-t-2 " + color} />
    <div className="flex flex-1 items-center justify-center pb-[3px] whitespace-nowrap">{children}</div>
  </Cell>
);

const OPS = [
  { n: 1, ratio: "1.00", hz: "0.00 Hz", text: "text-[#ff1e46]", color: "#ff1e46", h: "h-[49px]", low: "h-[17px]", arc: [-139, 105] },
  { n: 2, ratio: "2.00", hz: "0.75 Hz", text: "text-[#ffdc3c]", color: "#ffdc3c", h: "h-[53px]", low: "h-[21px]", arc: [-139, 139] },
  { n: 3, ratio: "4.00", hz: "0.00 Hz", text: "text-[#5aa5f0]", color: "#5aa5f0", h: "h-[53px]", low: "h-[21px]", arc: [-139, 139] },
  { n: 4, ratio: "6.00", hz: "8.40 Hz", text: "text-[#c36eff]", color: "#c36eff", h: "h-[49px]", low: "h-[17px]", arc: [-139, 139] },
];
const MATRIX = [[43, 35, 0, 0, 0], [0, 0, 0, 17, 0], [0, 0, 0, 0, 69], [0, 29, 49, 0, 0]];

const Mod = ({ label }) => <div className="flex flex-col items-center text-[10px] leading-[12px] font-bold text-[#32ff96]">{label}<ModRoute color="#32ff96" /></div>;
const Corner = () => <svg width="11" height="7" fill="none" stroke="#3c3c3c" strokeWidth="1.2"><path d="M0 1h4q2 0 3.500 2.500T11 6.500" /></svg>;

function FM4() {
  return (
    <Device title="FM-4" windowed active className="w-[549px]">
      <div className="flex w-[68px] flex-col gap-[3px]">
        <Cell className="flex h-[69px] flex-col bg-[#dcdcdc]">
          <div className="relative h-[50px]">
            <svg width="68" height="50" fill="none"><path d="M4 26.500h61" stroke="#222" strokeWidth="1.3" /><path d="M4 26.500C7 18 13 6.500 18.500 6.500S29 18 34 26.500 43 47 48.500 47 60 35 63.500 27" stroke="#ff8a30" strokeWidth="1.1" /><circle cx="52" cy="27" r="2.5" fill="#fff" /></svg>
            <span className="absolute top-[3px] right-[3px] text-[10.5px] leading-3 text-[#282828]">MW</span>
          </div>
          <div className="mt-[6px] ml-[26px]"><ModRoute color="#37d2ff" /></div>
        </Cell>
        <Cell className="flex h-[69px] flex-col bg-[#dcdcdc]">
          <div className="mt-[3px] text-center text-[11.3px] leading-[15px] text-[#282828]">Expressions</div>
          <div className="mt-[2px] grid grid-cols-2 gap-y-1 pl-0.5"><Mod label="VEL" /><Mod label="TIMB" /><Mod label="REL" /><Mod label="PRES" /></div>
        </Cell>
        <Cell className="flex h-[69px] items-center justify-center bg-[#bebebe]"><PlusMark color="#666" /></Cell>
      </div>
      <div className="flex w-[129px] flex-col gap-[3px]">
        {OPS.map((o) => (
          <Cell key={o.n} className={"flex bg-[#bebebe] " + o.h + " " + o.text}>
            <div className="my-1 ml-1 flex w-[21px] items-center justify-center rounded-[3px] bg-[#e1e1e1] font-['Roboto',sans-serif] text-[13px] font-bold">{o.n}</div>
            <div className="my-1 ml-[3px] flex w-[57px] flex-col gap-[3px] text-[11.5px]">
              <div className="flex h-[21px] items-center justify-end rounded-[3px] bg-[#e1e1e1] pt-[2px] pr-[5px]">{o.ratio}</div>
              <div className={"flex items-center rounded-[3px] bg-[#e1e1e1] pl-[3px] " + o.low}>
                <div className="h-[11px] w-[3px] bg-[#bebebe]" />
                <div className="flex-1 pt-[2px] pr-[5px] text-right">{o.hz}</div>
              </div>
            </div>
            <Unit className="flex-1 pt-2" label="Mod" dark at={139} arc={o.arc} color={o.color} track="#dcdcdc" />
          </Cell>
        ))}
      </div>
      <div className="flex w-[181px] flex-col gap-[3px]">
        <Cell className="flex h-[49px] bg-[#bebebe]">
          <div className="my-1 ml-1 flex w-[21px] items-center justify-center rounded-[3px] bg-[#e1e1e1] text-[12.5px] font-black text-white">N</div>
          <div className="ml-[7.5px] flex pt-2">
            <Unit className="w-9" label={<Corner />} soft at={0} track="#dcdcdc" arc={[0, 139]} color="#e6e6e6" />
            <Unit className="w-9" label="Reso" soft at={112} arc={[-139, 112]} color="#fff" track="#dcdcdc" />
            <Unit className="w-9" label="Drive" soft track="#d8d8d8" />
            <Unit className="w-9" label="Mod" dark at={60} arc={[-139, 60]} color="#fff" track="#dcdcdc" />
          </div>
        </Cell>
        <Cell className="h-[109px] bg-[#e1e1e1]">
          <div className="ml-[25px] flex h-[22px] items-center pt-[2px] text-[11.5px] font-bold text-[#1e1e1e]">
            {["1", "2", "3", "4", "N"].map((h) => <span key={h} className="w-[30px]">{h}</span>)}
          </div>
          <div className="flex flex-col gap-[5px]">
            {MATRIX.map((row, r) => (
              <div key={r} className="flex h-[15px] gap-[5px]">
                <div className={"flex w-[21px] items-center justify-end pr-px pb-[3px] text-[11.5px] " + OPS[r].text}>
                  <svg width="8" height="7" fill="none" stroke="currentColor"><path d="M0 3.500h7M4.500 1 7 3.500 4.500 6" /></svg>{r + 1}
                </div>
                {row.map((v, c) => (
                  <div key={c} className={"flex w-[25px] items-center pt-[2px] pl-[2px] text-[11.5px] text-[#ff8214] " + (v ? "bg-[#e9ceb5]" : "bg-[#e5d9ce]")}>{v}</div>
                ))}
              </div>
            ))}
          </div>
        </Cell>
        <Cell className="flex h-[49px] bg-[#bebebe]">
          <div className="flex w-[32.5px] flex-col items-center pt-[11px] pl-1.5 text-[10px] leading-3 text-[#32ff96]">
            AEG<svg width="13" height="10" fill="none" stroke="#32ff96" strokeWidth="1.2"><path d="M.5 9.500 4 1.500l2 5h3.500l3 3" /></svg>
          </div>
          <div className="ml-[-1px] flex pt-2">
            <Unit className="w-9" label="A" soft track="#d8d8d8" />
            <Unit className="w-9" label="D" soft at={52} arc={[-139, 52]} track="#d8d8d8" />
            <Unit className="w-9" label="S" soft track="#d8d8d8" />
            <Unit className="w-9" label="R" soft track="#d8d8d8" />
          </div>
        </Cell>
      </div>
      <Cell className="w-[45px] bg-[#dcdcdc] pt-2">
        <Unit className="h-10" label="1" at={139} arc={[-139, 139]} color="#ff1e46" />
        <Unit className="h-10" label="2" />
        <Unit className="h-10" label="3" />
        <Unit className="h-11" label="4" />
        <Unit label="N" />
      </Cell>
      <div className="flex w-[81px] flex-col gap-[3px]">
        <Bracket className="h-[33px]">Note FX</Bracket>
        <Bracket className="h-[33px]">FX</Bracket>
        <Cell className="flex h-[141px] flex-col items-center bg-[#dcdcdc] pt-2">
          <div className="grid h-[84px] grid-cols-[36px_36px] grid-rows-[44px_40px]">
            <Unit label="Pitch" at={0} tip="#ff8214" />
            <Unit label="Glide" />
            <Unit label="Gain" at={0} tip="#ff8214" />
            <Unit label="Pan" at={0} tip="#ff8214" />
          </div>
          <Unit size="m" label="Out" at={83} arc={[-139, 83]} />
        </Cell>
      </div>
    </Device>
  );
}

function ChainDevice() {
  return (
    <Device title="CHAIN" className="w-[86px]">
      <div className="flex w-[53px] flex-col gap-[3px]">
        <Bracket className="h-[25px]">CHAIN</Bracket>
        <Cell className="flex h-[185px] flex-col items-center bg-[#dcdcdc] pt-[59px]">
          <Unit size="m" className="h-[73px]" label="Wet Gain" at={0} tip="#ff8214" />
          <Unit size="m" label="Mix" at={139} arc={[-139, 139]} />
        </Cell>
      </div>
    </Device>
  );
}

function Delay() {
  return (
    <Device title="DELAY+" className="w-[338px]">
      <Cell className="flex w-[29px] flex-col items-center bg-[#dcdcdc] pt-[9px]">
        <svg width="20" height="96" fill="none" stroke="#707070" strokeWidth="1.2">
          <circle cx="10" cy="5" r="4.2" />
          <g stroke="#ff1e46"><circle cx="7.5" cy="33" r="4.2" /><circle cx="12" cy="33" r="4.2" /></g>
          <circle cx="6" cy="61" r="4.2" /><circle cx="15.5" cy="61.5" r="2.5" />
          <circle cx="4.5" cy="89.5" r="2.5" /><circle cx="14" cy="89" r="4.2" />
        </svg>
        <div className="mt-auto mb-2 text-[#3c3c3c]"><Vertical className="text-[11.3px]">Stereo</Vertical></div>
      </Cell>
      <div className="flex w-[125px] flex-col gap-[3px]">
        <Cell className="h-[141px] bg-[#e1e1e1] pt-[9px]">
          <div className="flex items-center pl-[9px] [&>*]:flex [&>*]:w-[26.7px] [&>*]:justify-center">
            <div><svg width="11" height="11"><circle cx="5.5" cy="5.5" r="4.7" fill="none" stroke="#707070" strokeWidth="1.3" /><path d="M5.500 5.500V1.500A4 4 0 0 1 9.500 5.500z" fill="#707070" /></svg></div>
            <div><Note color="#ff1e46" flags={2} /></div>
            <div><Note color="#707070" /></div>
            <div><Note color="#707070" flags={0} /></div>
          </div>
          <div className="mt-[9px] ml-[12px] grid w-[100px] grid-cols-4 text-center text-[12px] leading-5 text-[#3c3c3c]">
            {[1, 2, 3, 4, 5, 6, 7, 8].map((n) => (
              <div key={n} className={n === 3 ? "border-b-2 border-[#ff1e46] leading-[19px] text-[#ff1e46]" : "h-5"}>{n}</div>
            ))}
          </div>
          <div className="mt-[7px] ml-4 h-[17px] w-[93px] rounded-[2px] bg-[#dadada] pr-[2px]">
            <div className="mx-auto h-full w-[2px] bg-[#ff1e46]" />
          </div>
          <div className="mt-px ml-[21px] flex w-[96px] items-start justify-between text-[7px] leading-[8px] text-[#a0a0a0]">
            <div className="flex w-6 flex-col items-center gap-[3px]"><Tri dir="u" color="#a8a8a8" w={7} h={5} /><div className="-ml-2 flex"><span>3</span><Note color="#a8a8a8" flags={2} /></div></div>
            <div className="mr-[8px] flex w-3 flex-col items-center gap-[3px]"><Tri dir="u" color="#ff1e46" w={7} h={5} /><Note color="#ff1e46" flags={2} /></div>
            <div className="flex w-3 flex-col items-center gap-[3px]"><Tri dir="u" color="#a8a8a8" w={7} h={5} /><Note color="#a8a8a8" dot flags={2} /></div>
          </div>
          <div className="mt-[7px] pl-[42px] text-[12px] leading-[15px] text-[#dc7896]"><span className="mr-[6px] text-[13px] text-[#909090]">±</span>0 ms</div>
        </Cell>
        <Cell className="flex h-[69px] flex-col items-center bg-[#dcdcdc] pt-[3px]">
          <div className="h-3 text-[11.5px] leading-[14px] text-[#606060]">EQ</div>
          <div className="flex">
            <Unit size="m" className="w-14" at={-70} arc={[-70, 139]} label={<svg width="11" height="7" fill="none" stroke="#3c3c3c" strokeWidth="1.2"><path d="M.5 7q0-6 5-6H11" /></svg>} />
            <Unit size="m" className="w-14" at={32} arc={[-139, 32]} label={<svg width="11" height="7" fill="none" stroke="#3c3c3c" strokeWidth="1.2"><path d="M0 1h5.500q5 0 5 6" /></svg>} />
          </div>
        </Cell>
      </div>
      <Cell className="relative w-[73px] bg-[#dcdcdc] pt-[11px]">
        <Unit size="l" className="h-[72px]" labelClass="-mt-px" label={<div className="flex w-[61px] items-center justify-between"><Tri dir="l" w={5} h={6} color="#707070" />Soft<Tri w={5} h={6} color="#707070" /></div>} />
        <Unit size="l" className="h-[68px]" labelClass="-mt-px" at={-60} arc={[-139, -60]} color="#bee12d"
          label={<svg width="13" height="12" fill="none" stroke="#3c3c3c" strokeWidth="1.4"><path d="M4.500 8.500H1V1.200h11v7.300H7M9 5.500 6 8.500l3 3" /></svg>} />
        <Unit size="l" labelClass="-mt-px" label="Ducking" />
        <div className="absolute top-[103px] right-[6px]"><Tri dir="l" w={5} h={6} color="#707070" /></div>
        <div className="absolute top-[168px] left-[68px] z-10 flex h-[21px] w-[13px] items-center">
          <div className="absolute left-[5px] h-full w-[3px] bg-[#dcdcdc]" />
          <svg width="13" height="7" fill="none" stroke="#707070" strokeWidth="1.2" className="relative"><path d="M0 3.500h12M9 .5l3.200 3L9 6.500" /></svg>
        </div>
      </Cell>
      <div className="flex w-[69px] flex-col gap-[3px]">
        <Bracket color="border-[#bee12d]" className="h-[33px]">FB FX</Bracket>
        <Cell className="flex h-[177px] flex-col items-center bg-[#dcdcdc] pt-4">
          <Flake />
          <Unit size="l" className="mt-[14px] h-[68px]" labelClass="-mt-px" label="Width" at={139} arc={[-139, 139]} />
          <Unit size="l" labelClass="-mt-px" label="Mix" at={-46} arc={[-139, -46]} />
        </Cell>
      </div>
    </Device>
  );
}

function DualPan() {
  return (
    <Device title="DUAL PAN" className="w-[102px]">
      <Cell className="flex w-[69px] flex-col items-center bg-[#dcdcdc] pt-[11px]">
        <Unit size="l" className="h-[72px]" label="L" labelClass="-mt-px" arc={[-139, 0]} />
        <Unit size="l" className="h-[78px]" label="R" labelClass="-mt-px" at={139} arc={[0, 139]} />
        <div className="w-[59px] overflow-hidden rounded-[3px] text-center text-[11.5px] whitespace-nowrap outline outline-[#c8c8c8]">
          <div className="h-6 bg-linear-to-b from-[#e6e6e6] to-[#acacac] leading-6 tracking-[-0.3px] text-black">Equal Gain</div>
          <div className="h-[23px] bg-linear-to-b from-[#ff8a16] to-[#ee7c10] leading-6 text-[#f4f4f4]">Hybrid</div>
        </div>
      </Cell>
    </Device>
  );
}

const ENVELOPE = [[0, 33], [2, 24], [4, 22], [12, 19], [35, 14], [68, 9], [118, 4], [175, 1.5]];
const amplitude = (x) => {
  const i = ENVELOPE.findIndex(([ex]) => ex > x);
  const [x0, a0] = ENVELOPE[i - 1];
  const [x1, a1] = ENVELOPE[i];
  return a0 + ((a1 - a0) * (x - x0)) / (x1 - x0);
};
const WAVE = Array.from({ length: 172 }, (_, x) => {
  const a = amplitude(x) * (0.92 + 0.08 * Math.sin(x * 2.7) * Math.cos(x * 1.3));
  return `M${x + 0.5} ${79 - a}V${79 + a}`;
}).join("");

function Convolution() {
  return (
    <Device title="CONVOLUTION" className="w-[300px]">
      <Cell className="flex w-[61px] flex-col items-center bg-[#dcdcdc] pt-[11px]">
        <Unit size="l" className="h-[72px]" labelClass="-mt-px" label="Tune" at={0} tip="#5aa5f0" />
        <Unit size="l" className="h-[68px]" labelClass="-mt-px" at={0} dark tip="#5aa5f0"
          label={<svg width="11" height="11" stroke="#3c3c3c" strokeWidth="1.1"><circle cx="5.5" cy="5.5" r="2.3" fill="#3c3c3c" /><path d="M5.500 0v2M5.500 9v2M0 5.500h2M9 5.500h2M1.600 1.600 3 3M8 8l1.400 1.400M9.400 1.600 8 3M3 8 1.600 9.400" /></svg>} />
        <Unit size="l" labelClass="-mt-px" label="Pre-delay" />
      </Cell>
      <Cell className="flex w-[220px] flex-col bg-[#e1e1e1] pt-2">
        <div className="flex h-3 items-center pl-2"><Folder /><span className="ml-5 text-[11.2px] tracking-[-0.1px] whitespace-nowrap text-[#3c3c3c]">Saint Peter's Cathedral Sainte</span></div>
        <div className="relative mt-2 ml-[10px] h-[157px] border-l border-[#ffdc3c]">
          <svg width="180" height="157" className="absolute inset-0"><path d={WAVE} stroke="#ebebeb" /></svg>
          <div className="relative flex size-[13px] items-center justify-center bg-[#ffdc3c] text-[11px] leading-3 text-white">S</div>
        </div>
        <div className="mt-[9px] ml-[11px] flex items-center text-[11.5px] leading-3 text-[#3c3c3c]">
          <svg width="15" height="12" fill="#ffdc3c"><path d="M0 0h5v5H1v7H0zM15 0h-5v5h4v7h1z" /></svg>
          <svg width="11" height="10" className="ml-[11px]" fill="none" stroke="#555" strokeWidth="1.2"><circle cx="2.5" cy="7.5" r="1.9" /><circle cx="8" cy="2.5" r="1.9" /><path d="M4 6l2.500-2" /></svg>
          <span className="ml-[87px] w-[41px]">4 ch</span><span>4</span>
        </div>
      </Cell>
    </Device>
  );
}

function DevicePanel() {
  return (
    <div className="relative flex h-[247px] overflow-hidden rounded border-2 border-[#acacac] bg-[#f1f1f1]">
      {[["PROJECT", <Crown />, "bg-[#505050]"], ["FM-4", <Keys />, "bg-[#cacaca]"]].map(([t, icon, bar]) => (
        <div key={t} className="mr-[2px] flex w-[27px] shrink-0 flex-col bg-[#c0c0c0]">
          <div className="h-2" />
          <div className={"h-1 " + bar} />
          <Strip title={t} head={<div className="pt-[2px]">{icon}</div>} className="h-[219px]" />
          <div className={"h-1 " + bar} />
          <div className="h-2" />
        </div>
      ))}
      <AddSlot className="w-[22px]" />
      <FM4 />
      <AddSlot />
      <ChainDevice />
      <AddSlot />
      <Delay />
      <AddSlot />
      <DualPan />
      <AddSlot />
      <Convolution />
      <div className="absolute bottom-0 left-[59px] h-1 w-[1311px] border-t border-[#fdfdfd] bg-linear-to-b from-white to-[#ededed]" />
      <div className="absolute inset-y-0 right-0 w-5 bg-linear-to-r from-transparent to-[#e9e9e9]" />
    </div>
  );
}

/* ---------- browser ---------- */
const Tile = ({ kind }) => {
  const bg = { fx: "from-[#ff8560] to-[#e6551a]", note: "from-[#6ccbf2] to-[#25a2d6]", chain: "from-[#f27048] to-[#c24a24]", drum: "from-[#ffdc50] to-[#d8a810]", inst: "from-[#ffdc50] to-[#d8a810]" }[kind];
  return (
    <div className={"flex size-[19px] shrink-0 items-center justify-center rounded-[3px] border border-[#909090] bg-linear-to-b " + bg}>
      {kind === "fx" && <svg width="13" height="15"><path d="M2.500.500h8v14h-8z" fill="#f08058" stroke="#4a2418" /><path d="M4 2h2v2H4zM7 2h2v2H7zM1 5h1.500v2H1zM10.500 5H12v2h-1.500zM2.500 9.500h8v5h-8z" fill="#4a2418" /><path d="M3 5.500h7" stroke="#4a2418" strokeWidth=".6" /></svg>}
      {kind === "note" && <svg width="12" height="8" stroke="#111" strokeWidth="1.2"><path d="M0 1.200h5.500M0 6.500h5.500M7.500 4H12" /></svg>}
      {kind === "chain" && <svg width="9" height="8"><path d="M0 0h4v2h5v6H0z" /></svg>}
      {kind === "drum" && <svg width="15" height="15"><rect x=".5" y=".5" width="14" height="14" fill="#d8a818" stroke="#333" /><path d="M4 0v15M7.500 0v15M11 0v15M0 4h15M0 7.500h15M0 11h15" stroke="#333" /></svg>}
      {kind === "inst" && <svg width="13" height="13"><rect x=".6" y=".6" width="11.8" height="11.8" fill="#f5d050" stroke="#222" strokeWidth="1.2" /><path d="M4.500 8v4.500M8.500 8v4.500" stroke="#222" strokeWidth=".9" /><path d="M3.300 1h2.400v7.500H3.300zM7.300 1h2.400v7.500H7.300z" /></svg>}
    </div>
  );
};
const ITEMS = [
  ["Amp", "fx", 1], ["Arpeggiator", "note", 1], ["Audio Receiver", "fx", 0], ["Bend", "note", 1], ["Bit-8", "fx", 1], ["Blur", "fx", 1],
  ["Chain", "chain", 1], ["Channel Filter", "note", 1], ["Channel Map", "note", 0], ["Chorus+", "fx", 1], ["Chorus", "fx", 1], ["Comb", "fx", 1],
  ["Compressor", "fx", 1], ["Convolution", "fx", 1], ["DC Offset", "fx", 0], ["De-Esser", "fx", 0], ["Delay+", "fx", 1], ["Delay-1", "fx", 1],
  ["Delay-2", "fx", 1], ["Delay-4", "fx", 1], ["Distortion", "fx", 1], ["Dribble", "note", 1], ["Drum Machine", "drum", 1], ["Dual Pan", "fx", 0],
  ["Dynamics", "fx", 1], ["E-Clap", "inst", 1], ["E-Cowbell", "inst", 1], ["E-Hat", "inst", 1], ["E-Kick", "inst", 1], ["E-Snare", "inst", 1],
];
const Flower = () => (
  <svg width="11" height="12" viewBox="0 0 11 12" fill="none" stroke="#787878" strokeWidth="1">
    <ellipse cx="5.5" cy="2.4" rx="1.1" ry="1.9" /><ellipse cx="5.5" cy="9.6" rx="1.1" ry="1.9" />
    <ellipse cx="2.4" cy="4.2" rx="1.9" ry="1.1" transform="rotate(30 2.4 4.2)" /><ellipse cx="8.6" cy="4.2" rx="1.9" ry="1.1" transform="rotate(-30 8.6 4.2)" />
    <ellipse cx="2.4" cy="7.8" rx="1.9" ry="1.1" transform="rotate(-30 2.4 7.8)" /><ellipse cx="8.6" cy="7.8" rx="1.9" ry="1.1" transform="rotate(30 8.6 7.8)" />
  </svg>
);
const Tab = ({ children, className }) => <div className={"flex h-5 w-[19px] shrink-0 items-center justify-center rounded-[3px] border border-[#c4c4c4] " + className}>{children}</div>;

function Browser() {
  return (
    <div className="flex w-[221px] shrink-0 flex-col overflow-hidden rounded border-2 border-[#acacac] bg-[#dcdcdc]">
      <div className="flex h-[41px] items-center border-b border-[#acacac] pb-[2px] pl-[9px]">
        <svg width="17" height="18" fill="none" stroke="#6a6a6a" strokeWidth="1.3"><path d="M.7.7h5.600v6.100H.7zM10.700.7h5.600v6.100h-5.600zM.7 11.200h5.600v6.100H.7zM10.700 11.200h5.600v6.100h-5.600z" /></svg>
        <div className="ml-3 flex size-[21px] items-center justify-center rounded-[3px] border-2 border-[#333] bg-black">
          <svg width="13" height="13" stroke="#fff" strokeWidth="1.2"><path d="M6.500.500v12M1.500 3.500l10 6M11.500 3.500l-10 6" /></svg>
        </div>
        <Tab className="ml-[4px] bg-linear-to-r from-[#c4c4c4] from-20% to-[#6e6e6e] to-25%" />
        <Tab className="ml-[5px] bg-[#a4a4a4]"><svg width="17" height="18"><path d="M4 5q4-3 9 0v1H4zM2 8h9v4H2z" fill="#666" /><circle cx="12" cy="13" r="4" fill="#777" stroke="#ddd" /><path d="M11 15.500v-5h1.500a1.200 1.200 0 0 1 0 2.500H11" fill="none" stroke="#eee" /></svg></Tab>
        <Tab className="ml-[5px] bg-linear-to-b from-[#d9aee0] from-20% to-[#6c6c6c] to-22%"><svg width="15" height="11" className="mt-1" stroke="#d79fe0"><path d="M.5 5v2M2.500 2v8M4.500 0v11M6.500 3v6M8.500 4v4M10.500 3v6M12.500 5v2M14.500 5.500v1" /></svg></Tab>
        <Tab className="ml-[5px] bg-linear-to-b from-[#ecd070] to-[#eab878]"><svg width="13" height="15" fill="#8c7850"><circle cx="6.5" cy="4" r="3" /><path d="M0 15V11q2-3 6.500-3T13 11v4z" /></svg></Tab>
        <svg width="19" height="20" className="ml-[5px]"><rect x=".7" y=".7" width="17.6" height="15.6" rx="2" fill="#98d4e6" stroke="#ececec" strokeWidth="1.4" /><rect x="1.900" y="1.900" width="15.200" height="13.200" fill="none" stroke="#888" strokeWidth=".7" /><path d="M6 17h7l2 2.500H4z" fill="#f0f0f0" stroke="#aaa" strokeWidth=".5" /></svg>
      </div>
      <div className="relative flex h-[31px] items-center justify-center text-[11.5px] text-[#3c3c3c]"><span className="pr-[1px]">Everything</span><Star size={17} strokeWidth={1.6} color="#e8dc9c" className="absolute top-1.5 right-[8px]" /></div>
      <div className="mx-1.5 flex h-[21px] items-center rounded-[4px] bg-[#f1f1f1] px-1.5">
        <Search size={11} strokeWidth={2.6} color="#3c3c3c" />
        <svg width="5" height="4" className="mt-1"><path d="M0 0h5L2.500 4z" fill="#3c3c3c" /></svg>
        <X size={12} strokeWidth={1.9} color="#666" className="mr-[2px] ml-auto" />
      </div>
      <div className="mt-px grid h-[78px] auto-rows-[25px] grid-cols-[103px_1fr] content-start pl-[11px] text-[11.5px] text-[#3c3c3c]">
        {["Location", "File Kind", "Category", "Creator", "Device", "Tags"].map((f) => (
          <div key={f} className="flex h-[25px] items-center gap-[8px]"><Flower />{f}</div>
        ))}
      </div>
      <div className="relative h-[693px] bg-[#f1f1f1] pt-[3px]">
        {ITEMS.map(([name, kind, more]) => (
          <div key={name} className="flex h-[23px] items-center pl-2 text-[11.3px] text-black">
            <Tile kind={kind} />
            <span className="ml-[6.5px] flex-1">{name}</span>
            {more ? <svg width="6" height="9" fill="none" stroke="#666" strokeWidth="1.3" className="mr-[15px]"><path d="M.7.5 5 4.500.7 8.500" /></svg> : null}
          </div>
        ))}
        <div className="absolute top-0 right-0 h-[17px] w-1 bg-linear-to-b from-white to-[#dcdcdc]" />
        <div className="absolute inset-x-0 bottom-0 h-5 bg-linear-to-b from-[#f1f1f1]/10 to-[#f1f1f1]/70" />
      </div>
      <div className="flex h-[29px] items-center pl-2 text-[11.5px] font-bold text-black">
        <Tile kind="inst" /><span className="ml-2 flex-1">FM-4</span>
        <svg width="9" height="6" fill="none" stroke="#222" strokeWidth="1.4" className="mr-[13px]"><path d="M.5.7 4.500 5 8.500.7" /></svg>
      </div>
      <div className="flex justify-between pr-5 pl-[13px] text-center text-[11px] leading-4 text-[#333]">
        {[["TYPE", "Instrument"], ["CATEGORY", "Synth"], ["VENDOR", "Bitwig"]].map(([k, v]) => (
          <div key={k}><div className="text-[10.5px] text-[#666]">{k}</div><div>{v}</div></div>
        ))}
      </div>
    </div>
  );
}

/* ---------- status bar ---------- */
function StatusBar() {
  return (
    <div className="flex h-[37px] items-center pb-px text-[11.3px] text-[#282828]">
      <svg width="4" height="12" className="ml-[21px]" fill="#ff8214"><path d="M.8 0h2.500v2.500H.8zM0 4h3.300v6.500H4V12H0v-1.500h.8v-5H0z" /></svg>
      <div className="ml-[18px] h-5 w-[2px] bg-[#808080]" />
      <span className="ml-[15px] w-[67px] font-bold text-[#ff8214]">ARRANGE</span>
      <span className="w-9 font-medium">MIX</span>
      <span className="w-10 font-medium">EDIT</span>
      <div className="h-5 w-[2px] bg-[#808080]" />
      <svg width="12" height="12" className="ml-[14px]" fill="#333"><path d="M0 0h4v1.800H0zM5.500 2h2v1.800h-2zM8.500 2h3v1.800h-3zM0 5h2v1.800H0zM3.500 5h4v1.800h-4zM8.500 6h3v1.800h-3zM0 9.800h4v1.800H0zM5.500 8.500h2v1.800h-2z" /></svg>
      <div className="ml-[17px]"><Chain /></div>
      <svg width="15" height="15" className="ml-4"><rect x=".7" y=".7" width="13.6" height="13.6" rx="1" fill="#edc4a0" stroke="#ff8214" strokeWidth="1.4" /><rect width="4" height="15" fill="#ff8214" /></svg>
      <svg width="15" height="14" className="ml-4" fill="#e1e1e1" stroke="#333" strokeWidth="1.3"><path d="M2.500 0v14M7.500 0v14M12.500 0v14" /><circle cx="2.5" cy="6" r="1.7" /><circle cx="7.5" cy="10" r="1.7" /><circle cx="12.5" cy="4.5" r="1.7" /></svg>
      <span className="ml-[28px] w-9 text-[10.5px] font-medium">DRAG</span><span className="w-[74px] text-[#777]">Select time</span>
      <span className="w-[60px] text-[10.5px] font-medium whitespace-nowrap">ALT+DRAG</span><span className="w-[123px] text-[#777]">Rectangular selection</span>
      <span className="w-[82px] text-[10.5px] font-medium whitespace-nowrap">DOUBLE-CLICK</span><span className="text-[#777]">Insert clip</span>
      <Search size={15} strokeWidth={2.2} color="#ff8214" className="ml-auto" />
      <svg width="11" height="13" className="ml-[17px]" fill="#404040"><path d="M1 0h5v5h5v7a1 1 0 0 1-1 1H1a1 1 0 0 1-1-1V1a1 1 0 0 1 1-1zM7 0l4 4H7z" /></svg>
      <svg width="14" height="16" className="ml-[18px]"><path d="M3 0h8l3 3v10l-2 3H2l-2-3V3z" fill="#404040" /><circle cx="7" cy="9.5" r="4" fill="none" stroke="#e1e1e1" strokeWidth="1.3" /><circle cx="7" cy="9.5" r="1.5" fill="#e1e1e1" /><circle cx="7" cy="3" r="1.3" fill="#e1e1e1" /></svg>
      <svg width="14" height="14" className="ml-[17px]" fill="#404040"><path d="M4 0q1.500 0 1.500 1.500V5L12 6q1.500.5 1.300 2.500L12.500 12q-.5 1.500-2 1.500H6q-1.500 0-2-1L0 7.500q1-1 2.500.5V1.500Q2.500 0 4 0z" /></svg>
      <div className="ml-[14px] h-5 w-[2px] bg-[#808080]" />
      <Keys w={13} h={13} className="mr-[17px] ml-[14px]" color="#383838" />
    </div>
  );
}

export default function App() {
  return (
    <div className="flex h-[1080px] w-[1920px] flex-col overflow-hidden bg-[#e1e1e1] font-['Lato','Carlito',sans-serif]">
      <SystemBar />
      <TitleRow />
      <Toolbar />
      <div className="mt-[3px] flex h-[935px] pl-[5px]">
        <Inspector />
        <div className="ml-[3px] flex w-[1521px] shrink-0 flex-col gap-[3px]">
          <Arranger />
          <DevicePanel />
        </div>
        <div className="w-1" />
        <Browser />
      </div>
      <StatusBar />
    </div>
  );
}
